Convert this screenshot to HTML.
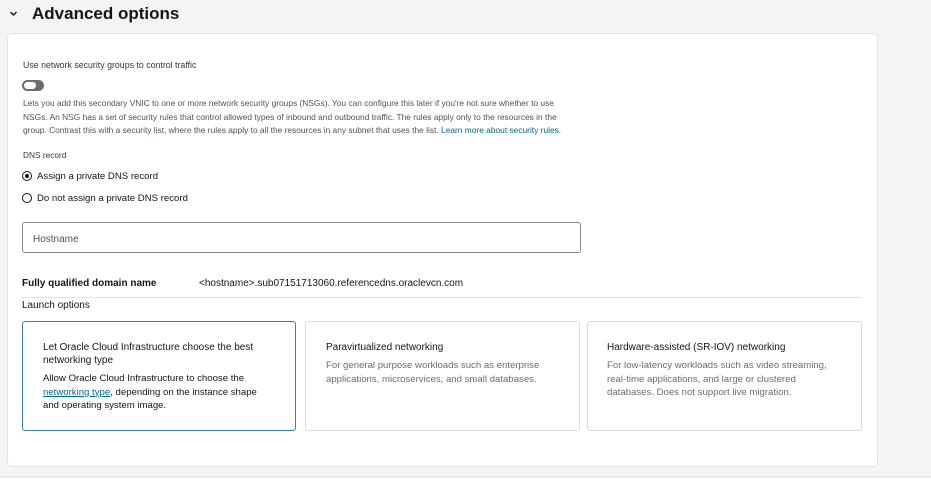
<!DOCTYPE html>
<html><head><meta charset="utf-8"><style>
*{margin:0;padding:0;box-sizing:border-box}
body{width:931px;height:479px;background:#f5f4f2;font-family:"Liberation Sans",sans-serif;color:#161513;position:relative;overflow:hidden}
.a{position:absolute;white-space:nowrap}
.card{position:absolute;left:7px;top:33px;width:871px;height:434px;background:#fff;border:1px solid #e4e2de;border-radius:5px}
.opt{position:absolute;top:321px;height:110px;background:#fff;border:1px solid #dedbd6;border-radius:3px}
.t{font-size:10px;color:#161513}
.d{font-size:9.6px;line-height:13.5px;color:#6f6c67;white-space:normal}
</style></head><body>
<svg class="a" style="left:9px;top:10px" width="9" height="7" viewBox="0 0 9 7"><path d="M1.5 2 L4.5 5 L7.5 2" stroke="#161513" stroke-width="1.4" fill="none"/></svg>
<div class="a" style="left:32px;top:4px;font-size:17px;font-weight:bold">Advanced options</div>
<div class="card"></div>
<div class="a" style="left:23px;top:60px;font-size:8.8px;color:#3a3835">Use network security groups to control traffic</div>
<div class="a" style="left:22px;top:80px;width:22px;height:11px;border-radius:6px;background:#6f6c67"></div>
<div class="a" style="left:24px;top:82px;width:12px;height:7px;border-radius:4px;background:#fff"></div>
<div class="a" style="left:23px;top:97px;font-size:8.4px;line-height:13.5px;color:#55524d">Lets you add this secondary VNIC to one or more network security groups (NSGs). You can configure this later if you're not sure whether to use<br>NSGs. An NSG has a set of security rules that control allowed types of inbound and outbound traffic. The rules apply only to the resources in the<br>group. Contrast this with a security list, where the rules apply to all the resources in any subnet that uses the list. <span style="color:#00688c">Learn more about security rules.</span></div>
<div class="a" style="left:23px;top:150px;font-size:8.3px;color:#3a3835">DNS record</div>
<div class="a" style="left:22px;top:171px;width:10px;height:10px;border:1px solid #161513;border-radius:50%"></div>
<div class="a" style="left:25px;top:174px;width:4px;height:4px;background:#161513;border-radius:50%"></div>
<div class="a" style="left:37px;top:171px;font-size:9.6px">Assign a private DNS record</div>
<div class="a" style="left:22px;top:193px;width:10px;height:10px;border:1px solid #161513;border-radius:50%"></div>
<div class="a" style="left:37px;top:193px;font-size:9.6px">Do not assign a private DNS record</div>
<div class="a" style="left:22px;top:222px;width:559px;height:31px;border:1px solid #8a8782;border-radius:3px"></div>
<div class="a" style="left:33px;top:234px;font-size:10px;color:#55524d">Hostname</div>
<div class="a" style="left:22px;top:278px;font-size:10px;font-weight:bold">Fully qualified domain name</div>
<div class="a" style="left:199px;top:278px;font-size:10px;color:#161513">&lt;hostname&gt;.sub07151713060.referencedns.oraclevcn.com</div>
<div class="a" style="left:22px;top:297px;width:840px;height:1px;background:#e4e2de"></div>
<div class="a" style="left:22px;top:300px;font-size:10px">Launch options</div>
<div class="opt" style="left:22px;width:274px;border:1.5px solid #3b7fa0;"></div>
<div class="a" style="left:43px;top:342px;width:230px">
<div class="t" style="line-height:12.5px;white-space:normal">Let Oracle Cloud Infrastructure choose the best networking type</div>
<div class="d" style="color:#161513;margin-top:5px">Allow Oracle Cloud Infrastructure to choose the <span style="color:#00688c;text-decoration:underline">networking type</span>, depending on the instance shape and operating system image.</div></div>
<div class="opt" style="left:305px;width:275px"></div>
<div class="a" style="left:326px;top:342px;width:240px"><div class="t">Paravirtualized networking</div>
<div class="d" style="margin-top:6px">For general purpose workloads such as enterprise applications, microservices, and small databases.</div></div>
<div class="opt" style="left:587px;width:275px"></div>
<div class="a" style="left:607px;top:342px;width:232px"><div class="t">Hardware-assisted (SR-IOV) networking</div>
<div class="d" style="margin-top:6px">For low-latency workloads such as video streaming, real-time applications, and large or clustered databases. Does not support live migration.</div></div>
<div class="a" style="left:0;top:476px;width:931px;height:1px;background:#e4e2de"></div>
</body></html>
